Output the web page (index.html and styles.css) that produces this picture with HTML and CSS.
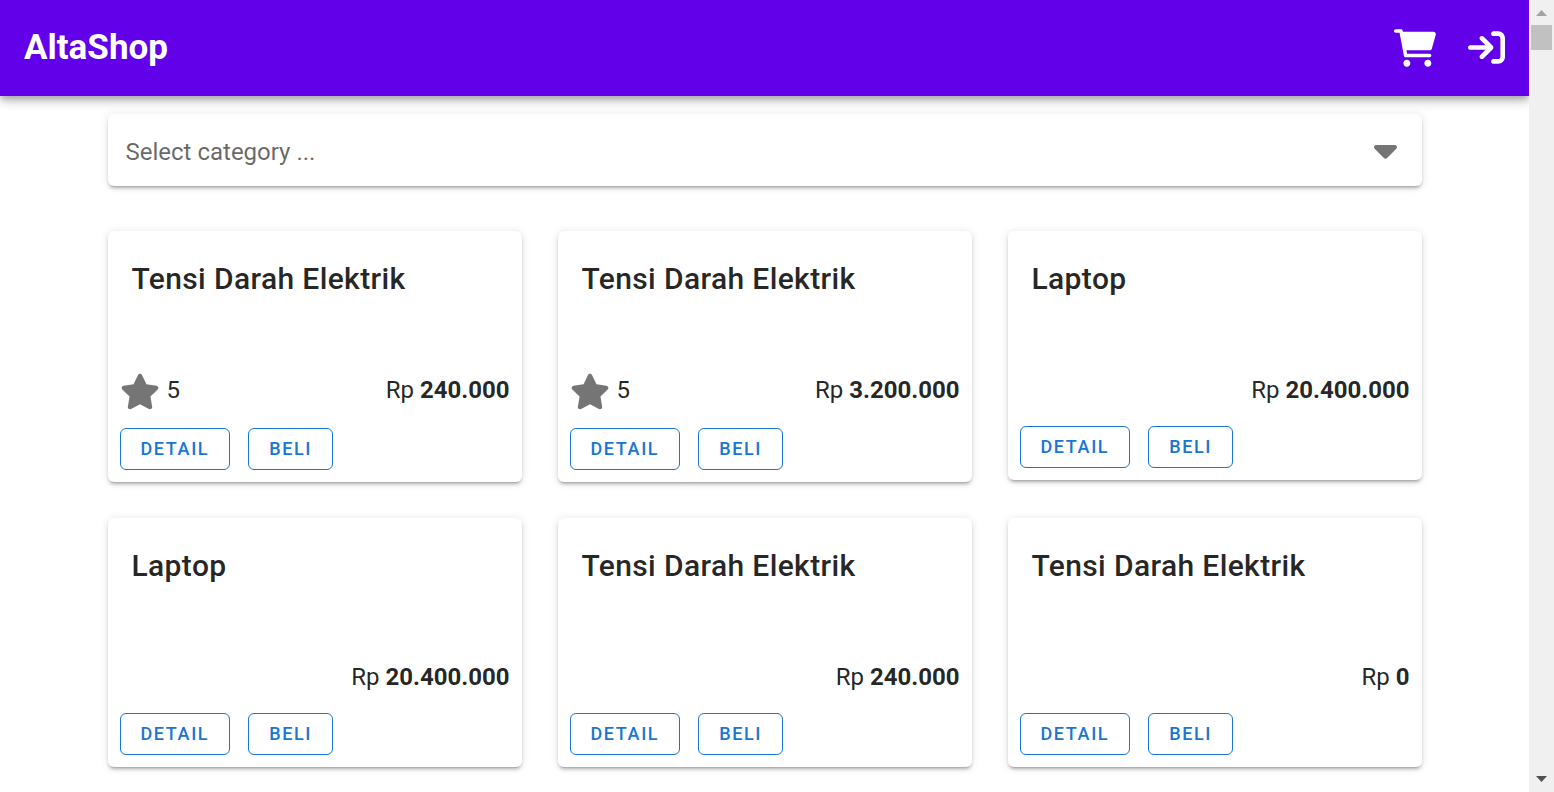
FILE: index.html
```html
<!DOCTYPE html>
<html lang="id">
<head>
<meta charset="utf-8">
<meta name="viewport" content="width=device-width, initial-scale=1">
<title>AltaShop</title>
<link rel="stylesheet" href="styles.css">
</head>
<body>
<svg class="sprite" aria-hidden="true">
  <symbol id="star" viewBox="0 0 576 512"><path d="M316.9 18C311.6 7 300.4 0 288.1 0s-23.4 7-28.8 18L195 150.3 51.4 171.5c-12 1.8-22 10.2-25.7 21.7s-.7 24.2 7.9 32.7L137.8 329 113.2 474.7c-2 12 3 24.2 12.9 31.3s23 8 33.8 2.3l128.300-68.500 128.300 68.500c10.800 5.700 23.900 4.900 33.800-2.300s14.900-19.300 12.900-31.300L438.500 329 542.700 225.900c8.600-8.500 11.700-21.200 7.900-32.700s-13.700-19.900-25.700-21.700L381.200 150.300 316.900 18z"/></symbol>
</svg>
<div class="app">
  <header class="bar">
    <a class="brand" href="#">AltaShop</a>
    <nav class="bar-actions">
      <a class="bar-link" href="#" aria-label="Cart">
        <svg class="icon-cart" viewBox="0 0 576 512"><path d="M96 0C107.500 0 117.400 8.190 119.600 19.510L121.100 32H541.800C562.100 32 578.300 52.250 572.600 72.660L518.600 264.700C514.700 278.500 502.100 288 487.800 288H170.700L179.900 336H488C501.300 336 512 346.700 512 360C512 373.300 501.300 384 488 384H159.100C148.500 384 138.600 375.800 136.400 364.500L76.140 48H24C10.750 48 0 37.250 0 24C0 10.750 10.750 0 24 0H96zM128 464C128 437.500 149.500 416 176 416C202.500 416 224 437.500 224 464C224 490.500 202.500 512 176 512C149.500 512 128 490.500 128 464zM512 464C512 490.500 490.500 512 464 512C437.500 512 416 490.500 416 464C416 437.500 437.500 416 464 416C490.500 416 512 437.500 512 464z"/></svg>
      </a>
      <a class="bar-link" href="#" aria-label="Login">
        <svg class="icon-login" viewBox="0 0 512 512"><path d="M352 96l64 0c17.7 0 32 14.3 32 32l0 256c0 17.7-14.3 32-32 32l-64 0c-17.7 0-32 14.3-32 32s14.3 32 32 32l64 0c53 0 96-43 96-96l0-256c0-53-43-96-96-96l-64 0c-17.7 0-32 14.3-32 32s14.3 32 32 32zm-9.4 182.6c12.5-12.5 12.5-32.8 0-45.3l-128-128c-12.5-12.5-32.8-12.5-45.3 0s-12.5 32.8 0 45.3L242.7 224 32 224c-17.7 0-32 14.3-32 32s14.3 32 32 32l210.7 0-73.4 73.4c-12.5 12.5-12.5 32.8 0 45.3s32.8 12.5 45.3 0l128-128z"/></svg>
      </a>
    </nav>
  </header>
  <main class="content">
    <div class="picker">
      <select class="picker-select" aria-label="Category"><option>Select category ...</option></select>
      <svg class="picker-caret" viewBox="0 0 320 512" aria-hidden="true"><path d="M137.4 374.6c12.5 12.5 32.8 12.5 45.3 0l128-128c9.2-9.2 11.9-22.9 6.9-34.9s-16.6-19.8-29.6-19.8L32 192c-12.9 0-24.6 7.8-29.6 19.8s-2.2 25.7 6.9 34.9l128 128z"/></svg>
    </div>
    <section class="grid">
      <article class="card">
        <h2 class="card-title">Tensi Darah Elektrik</h2>
        <div class="card-info"><span class="rating"><svg class="icon-star" aria-hidden="true"><use href="#star"/></svg>5</span><span class="price">Rp <b>240.000</b></span></div>
        <div class="card-actions"><button class="btn" type="button">DETAIL</button><button class="btn" type="button">BELI</button></div>
      </article>
      <article class="card">
        <h2 class="card-title">Tensi Darah Elektrik</h2>
        <div class="card-info"><span class="rating"><svg class="icon-star" aria-hidden="true"><use href="#star"/></svg>5</span><span class="price">Rp <b>3.200.000</b></span></div>
        <div class="card-actions"><button class="btn" type="button">DETAIL</button><button class="btn" type="button">BELI</button></div>
      </article>
      <article class="card">
        <h2 class="card-title">Laptop</h2>
        <div class="card-info"><span class="price">Rp <b>20.400.000</b></span></div>
        <div class="card-actions"><button class="btn" type="button">DETAIL</button><button class="btn" type="button">BELI</button></div>
      </article>
      <article class="card">
        <h2 class="card-title">Laptop</h2>
        <div class="card-info"><span class="price">Rp <b>20.400.000</b></span></div>
        <div class="card-actions"><button class="btn" type="button">DETAIL</button><button class="btn" type="button">BELI</button></div>
      </article>
      <article class="card">
        <h2 class="card-title">Tensi Darah Elektrik</h2>
        <div class="card-info"><span class="price">Rp <b>240.000</b></span></div>
        <div class="card-actions"><button class="btn" type="button">DETAIL</button><button class="btn" type="button">BELI</button></div>
      </article>
      <article class="card">
        <h2 class="card-title">Tensi Darah Elektrik</h2>
        <div class="card-info"><span class="price">Rp <b>0</b></span></div>
        <div class="card-actions"><button class="btn" type="button">DETAIL</button><button class="btn" type="button">BELI</button></div>
      </article>
    </section>
  </main>
</div>
<div class="scrollbar" aria-hidden="true">
  <svg class="scroll-arrow scroll-up" viewBox="0 0 25 25"><path d="M7 16h11l-5.500-6z"/></svg>
  <div class="scroll-thumb"></div>
  <svg class="scroll-arrow scroll-down" viewBox="0 0 25 25"><path d="M7 9h11l-5.500 6z"/></svg>
</div>
</body>
</html>
```
FILE: styles.css
```css
* {
  box-sizing: border-box;
}

body {
  display: flex;
  min-height: 100vh;
  margin: 0;
  background: #fff;
  color: rgba(0, 0, 0, 0.87);
  font-family: Roboto, "Liberation Sans", sans-serif;
  font-size: 24px;
  line-height: 36px;
}

svg {
  display: block;
  fill: currentColor;
}

.sprite {
  position: absolute;
  width: 0;
  height: 0;
}

.app {
  flex: 1;
  min-width: 0;
}

.bar {
  display: flex;
  align-items: center;
  justify-content: space-between;
  height: 96px;
  padding: 0 24px;
  background: #6200ea;
  color: #fff;
  box-shadow: 0 3px 6px -1px rgba(0, 0, 0, 0.2), 0 6px 8px rgba(0, 0, 0, 0.14), 0 2px 15px rgba(0, 0, 0, 0.12);
}

.brand {
  color: inherit;
  font-size: 35px;
  font-weight: 700;
  text-decoration: none;
}

.bar-actions {
  display: flex;
  gap: 32px;
}

.bar-link {
  color: inherit;
}

.icon-cart {
  width: 42px;
  height: 38px;
}

.icon-login {
  width: 37px;
  height: 37px;
}

.content {
  max-width: 1350px;
  margin: 0 auto;
  padding: 18px 18px 24px;
}

.picker,
.card {
  border-radius: 6px;
  background: #fff;
  box-shadow: 0 4px 2px -3px rgba(0, 0, 0, 0.2), 0 3px 3px rgba(0, 0, 0, 0.14), 0 1px 8px rgba(0, 0, 0, 0.12);
}

.picker {
  position: relative;
}

.picker-select {
  display: block;
  width: 100%;
  height: 72px;
  padding: 4px 60px 0 18px;
  border: 0;
  border-radius: 6px;
  appearance: none;
  background: transparent;
  color: rgba(0, 0, 0, 0.6);
  font: inherit;
}

.picker-caret {
  position: absolute;
  top: 17px;
  right: 25px;
  width: 23px;
  height: 37px;
  color: #757575;
  pointer-events: none;
}

.grid {
  display: grid;
  grid-template-columns: repeat(auto-fill, minmax(360px, 1fr));
  align-items: start;
  gap: 36px;
  margin-top: 45px;
}

.card {
  padding: 24px 12px 12px;
}

.card-title {
  min-height: 117px;
  margin: 0;
  padding: 0 12px;
  font-size: 30px;
  font-weight: 500;
  line-height: 48px;
  letter-spacing: 0.0125em;
}

.card-info {
  display: flex;
  align-items: flex-start;
}

.rating {
  display: flex;
  gap: 7px;
}

.icon-star {
  width: 40px;
  height: 38px;
  padding-top: 1px;
  color: #757575;
}

.price {
  margin-left: auto;
}

.price b {
  font-weight: 700;
}

.card-actions {
  display: flex;
  gap: 18px;
  margin-top: 18px;
}

.btn {
  height: 42px;
  padding: 0 20px 2px;
  border: 1px solid currentColor;
  border-radius: 6px;
  background: transparent;
  color: #1976d2;
  font-family: inherit;
  font-size: 18px;
  font-weight: 500;
  letter-spacing: 0.09em;
}

.scrollbar {
  display: flex;
  flex-direction: column;
  width: 25px;
  position: relative;
  background: #f0f0f0;
}

.scroll-arrow {
  width: 25px;
  height: 25px;
}

.scroll-up {
  color: #a3a3a3;
}

.scroll-down {
  margin-top: auto;
  color: #505050;
}

.scroll-thumb {
  height: 25px;
  margin: 0 2px;
  background: #c1c1c1;
}
```
